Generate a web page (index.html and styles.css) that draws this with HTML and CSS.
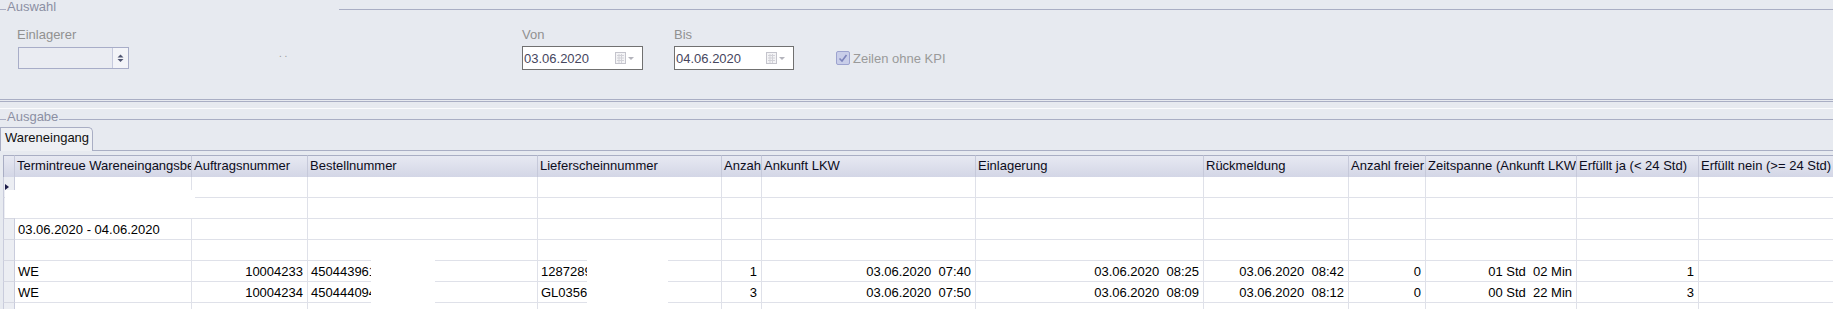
FILE: index.html
```html
<!DOCTYPE html>
<html lang="de">
   <head>
      <meta charset="UTF-8">
      <title>Wareneingang</title>
      <link rel="stylesheet" href="styles.css">
   </head>
   <body>
      <div class="group-head">
         <i class="tick"></i><span class="legend">Auswahl</span><i class="blank"></i><i class="rule"></i>
      </div>
      <div class="filters">
         <div class="field f-einl">
            <label>Einlagerer</label>
            <div class="combo">
               <span class="spin">
                  <svg width="15" height="20" viewBox="0 0 15 20"><path d="M4.5 9.5 L7.5 6.5 L10.5 9.5 Z" fill="#4f5470"/><path d="M4.5 11 L7.5 14 L10.5 11 Z" fill="#4f5470"/></svg>
               </span>
            </div>
         </div>
         <div class="dots">. .</div>
         <div class="field f-von">
            <label>Von</label>
            <div class="datebox">
               <span>03.06.2020</span>
               <svg class="cal" width="22" height="12" viewBox="0 0 22 12"><rect x="0.5" y="0.5" width="10" height="11" fill="#f4f4f6" stroke="#c4c4cc"/><path d="M2 3.5h7M2 6h7M2 8.5h7M4 2v9M6.5 2v9" stroke="#d2d2d8" stroke-width="1"/><path d="M13 5 L16 8 L19 5 Z" fill="#b4b4bc"/></svg>
            </div>
         </div>
         <div class="field f-bis">
            <label>Bis</label>
            <div class="datebox">
               <span>04.06.2020</span>
               <svg class="cal" width="22" height="12" viewBox="0 0 22 12"><rect x="0.5" y="0.5" width="10" height="11" fill="#f4f4f6" stroke="#c4c4cc"/><path d="M2 3.5h7M2 6h7M2 8.5h7M4 2v9M6.5 2v9" stroke="#d2d2d8" stroke-width="1"/><path d="M13 5 L16 8 L19 5 Z" fill="#b4b4bc"/></svg>
            </div>
         </div>
         <div class="check">
            <span class="box"><svg width="12" height="12" viewBox="0 0 12 12"><path d="M2.5 6.5 L5 9 L9.5 3" fill="none" stroke="#7d84bb" stroke-width="1.6"/></svg></span>
            <span>Zeilen ohne KPI</span>
         </div>
      </div>
      <div class="sep"></div>
      <div class="sep-light"></div>
      <div class="group-head out">
         <i class="tick"></i><span class="legend">Ausgabe</span><i class="rule"></i>
      </div>
      <div class="tabs">
         <div class="tab">Wareneingang</div>
         <div class="tab-rest"></div>
      </div>
      <div class="panel">
         <div class="grid">
            <div class="row head">
               <div class="cell sel"></div>
               <div class="cell">Termintreue Wareneingangsbearbeitung</div>
               <div class="cell">Auftragsnummer</div>
               <div class="cell">Bestellnummer</div>
               <div class="cell">Lieferscheinnummer</div>
               <div class="cell">Anzahl Paletten</div>
               <div class="cell">Ankunft LKW</div>
               <div class="cell">Einlagerung</div>
               <div class="cell">Rückmeldung</div>
               <div class="cell">Anzahl freier Plätze</div>
               <div class="cell">Zeitspanne (Ankunft LKW - Rückmeldung)</div>
               <div class="cell">Erfüllt ja (&lt; 24 Std)</div>
               <div class="cell">Erfüllt nein (&gt;= 24 Std)</div>
            </div>
            <div class="row">
               <div class="cell sel cur"><i class="arrow"></i></div>
               <div class="cell"></div><div class="cell"></div><div class="cell"></div><div class="cell"></div><div class="cell"></div><div class="cell"></div>
               <div class="cell"></div><div class="cell"></div><div class="cell"></div><div class="cell"></div><div class="cell"></div><div class="cell"></div>
            </div>
            <div class="row">
               <div class="cell sel"></div>
               <div class="cell"></div><div class="cell"></div><div class="cell"></div><div class="cell"></div><div class="cell"></div><div class="cell"></div>
               <div class="cell"></div><div class="cell"></div><div class="cell"></div><div class="cell"></div><div class="cell"></div><div class="cell"></div>
            </div>
            <div class="row">
               <div class="cell sel"></div>
               <div class="cell">03.06.2020 - 04.06.2020</div><div class="cell"></div><div class="cell"></div><div class="cell"></div><div class="cell"></div><div class="cell"></div>
               <div class="cell"></div><div class="cell"></div><div class="cell"></div><div class="cell"></div><div class="cell"></div><div class="cell"></div>
            </div>
            <div class="row">
               <div class="cell sel"></div>
               <div class="cell"></div><div class="cell"></div><div class="cell"></div><div class="cell"></div><div class="cell"></div><div class="cell"></div>
               <div class="cell"></div><div class="cell"></div><div class="cell"></div><div class="cell"></div><div class="cell"></div><div class="cell"></div>
            </div>
            <div class="row">
               <div class="cell sel"></div>
               <div class="cell">WE</div>
               <div class="cell num">10004233</div>
               <div class="cell">4504439610</div>
               <div class="cell">12872891</div>
               <div class="cell num">1</div>
               <div class="cell num">03.06.2020  07:40</div>
               <div class="cell num">03.06.2020  08:25</div>
               <div class="cell num">03.06.2020  08:42</div>
               <div class="cell num">0</div>
               <div class="cell num">01 Std  02 Min</div>
               <div class="cell num">1</div>
               <div class="cell"></div>
            </div>
            <div class="row">
               <div class="cell sel"></div>
               <div class="cell">WE</div>
               <div class="cell num">10004234</div>
               <div class="cell">4504440945</div>
               <div class="cell">GL03567</div>
               <div class="cell num">3</div>
               <div class="cell num">03.06.2020  07:50</div>
               <div class="cell num">03.06.2020  08:09</div>
               <div class="cell num">03.06.2020  08:12</div>
               <div class="cell num">0</div>
               <div class="cell num">00 Std  22 Min</div>
               <div class="cell num">3</div>
               <div class="cell"></div>
            </div>
            <div class="row">
               <div class="cell sel"></div>
               <div class="cell">WE</div>
               <div class="cell num">10004235</div>
               <div class="cell">4504438812</div>
               <div class="cell">GL03568</div>
               <div class="cell num">17</div>
               <div class="cell num">03.06.2020  07:50</div>
               <div class="cell num">03.06.2020  08:10</div>
               <div class="cell num">03.06.2020  08:10</div>
               <div class="cell num">0</div>
               <div class="cell num">00 Std  20 Min</div>
               <div class="cell num">17</div>
               <div class="cell"></div>
            </div>
            <div class="mask m1"></div>
            <div class="mask m2"></div>
            <div class="mask m3"></div>
         </div>
      </div>
   </body>
</html>
```

FILE: styles.css
```css
body,html{
   margin:0;
   padding:0;
}
body{
   width:1833px;
   height:309px;
   overflow:hidden;
   background:#e7eaf0;
   font-family:"Liberation Sans",Arial,sans-serif;
   font-size:13px;
   color:#000;
}
*{
   box-sizing:border-box;
}
i{
   display:block;
   font-style:normal;
}
/* group headers */
.group-head{
   display:flex;
   height:19px;
   color:#8b8fa3;
}
.group-head .legend{
   line-height:14px;
   padding:0 1px;
}
.tick{
   width:6px;
   height:0;
   margin-top:9px;
   border-top:1px solid #a9aec4;
}
.blank{
   width:282px;
}
.rule{
   flex:1;
   height:0;
   margin-top:9px;
   border-top:1px solid #a9aec4;
}
.group-head.out{
   margin-top:1px;
   height:17px;
}
/* filters */
.filters{
   display:flex;
   height:80px;
   padding-left:18px;
}
.field{
   display:flex;
   flex-direction:column;
   padding-top:8px;
}
.field label{
   color:#919191;
   line-height:16px;
}
.f-einl{
   width:259px;
}
.f-einl label{
   margin-left:-1px;
}
.combo{
   margin-top:4px;
   width:111px;
   height:22px;
   border:1px solid #a8adc8;
   background:#eaecf2;
   display:flex;
   justify-content:flex-end;
}
.spin{
   width:16px;
   height:100%;
   border-left:1px solid #c6cadd;
   background:#f3f4f8;
}
.spin svg{
   display:block;
}
.dots{
   width:245px;
   padding-top:29px;
   padding-left:2px;
   font-size:10px;
   color:#9a9a9a;
}
.f-von{
   width:152px;
}
.f-bis{
   width:162px;
}
.datebox{
   margin-top:3px;
   width:121px;
   height:24px;
   border:1px solid #707070;
   background:#fff;
   display:flex;
   align-items:center;
   padding-left:1px;
   color:#46465e;
}
.f-bis .datebox{
   width:120px;
}
.datebox span{
   flex:1;
}
.cal{
   display:block;
   margin-right:5px;
}
.check{
   display:flex;
   align-items:center;
   height:14px;
   margin-top:32px;
   color:#9a9a9a;
}
.box{
   width:14px;
   height:14px;
   border:1px solid #9da3cf;
   border-radius:2px;
   background:#c9cee9;
   margin-right:3px;
   display:flex;
   align-items:center;
   justify-content:center;
}
.box svg{
   display:block;
}
/* separators */
.sep{
   height:3px;
   border-top:1px solid #a9aec4;
   border-bottom:1px solid #a9aec4;
}
.sep-light{
   margin-top:6px;
   height:1px;
   background:#fafbfd;
}
/* tabs */
.tabs{
   display:flex;
   height:24px;
}
.tab{
   width:93px;
   border:1px solid #a9aec4;
   border-bottom:none;
   border-top-right-radius:5px;
   background:#eef0f4;
   padding:2px 0 0 4px;
   line-height:16px;
   color:#111;
}
.tab-rest{
   flex:1;
   border-bottom:1px solid #a9aec4;
}
/* grid */
.panel{
   padding:4px 0 0 3px;
   overflow:hidden;
   height:158px;
}
.grid{
   position:relative;
   width:max-content;
}
.row{
   display:grid;
   grid-template-columns:12px 177px 116px 230px 184px 40px 214px 228px 145px 77px 151px 122px 220px;
   height:21px;
}
.cell{
   background:#fff;
   border-right:1px solid #dfe1e9;
   border-bottom:1px solid #dfe1e9;
   padding:1px 4px 0 3px;
   line-height:19px;
   white-space:pre;
   overflow:hidden;
}
.num{
   text-align:right;
}
.sel{
   background:#eceef3;
   border-left:1px solid #c9ccdc;
   border-right-color:#c9ccdc;
   border-bottom-color:#d6d8e2;
   padding:0;
}
.cur{
   display:flex;
   align-items:center;
   padding-left:1px;
}
.arrow{
   width:0;
   height:0;
   border-left:4px solid #1c1c48;
   border-top:3.5px solid transparent;
   border-bottom:3.5px solid transparent;
}
.head{
   height:22px;
}
.head .cell{
   background:linear-gradient(#e7e9f2,#d3d6e6);
   border-top:1px solid #a9aec4;
   border-bottom:none;
   border-right-color:#c6c9da;
   padding:0 0 0 2px;
   line-height:20px;
   color:#0c0c20;
}
.head .sel{
   border-left-color:#a9aec4;
}
.mask{
   position:absolute;
   background:#fff;
}
.m1{
   left:2px;
   top:35px;
   width:190px;
   height:28px;
}
.m2{
   left:368px;
   top:105px;
   width:64px;
   height:60px;
}
.m3{
   left:584px;
   top:105px;
   width:81px;
   height:60px;
}
```
